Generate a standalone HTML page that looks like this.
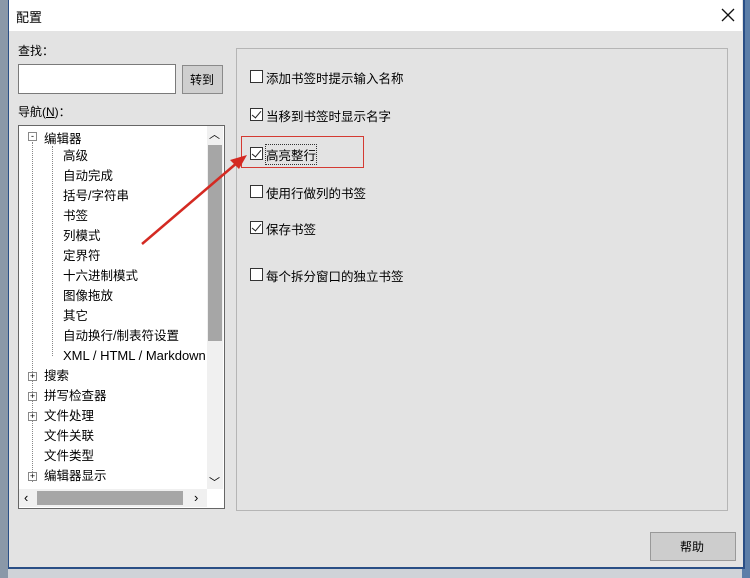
<!DOCTYPE html><html><head><meta charset="utf-8"><style>
body{margin:0;width:750px;height:578px;background:#cfd3d8;position:relative;overflow:hidden;font-family:"Liberation Sans","Noto Sans CJK SC",sans-serif;font-size:12px;color:#000}
.a{position:absolute}
.win{left:8px;top:0;width:734px;height:567px;background:#e3e3e3;border-left:1px solid #2a4f86;border-right:2px solid #2a4f86;border-bottom:2px solid #2a4f86}
.t{white-space:nowrap}
.cb{width:11px;height:11px;border:1px solid #333;background:#fff}
.ck::after{content:"";position:absolute;left:3px;top:0px;width:4px;height:8px;border-right:1.6px solid #222;border-bottom:1.6px solid #222;transform:rotate(40deg)}
.tr{font-size:12.5px}
</style></head><body>
<div class="a" style="left:0;top:0;width:8px;height:578px;background:#8a98a8"></div>
<div class="a" style="left:742px;top:0;width:8px;height:578px;background:#5c7ea8"></div>
<div class="a win"></div>
<div class="a" style="left:9px;top:0;width:733px;height:31px;background:#fff"></div>
<div class="a t" style="left:16px;top:7px;font-size:13px">配置</div>
<svg class="a" style="left:721px;top:8px" width="14" height="14"><path d="M1 1L13 13M13 1L1 13" stroke="#111" stroke-width="1.3"/></svg>
<div class="a t" style="left:18px;top:42px">查找：</div>
<div class="a" style="left:18px;top:64px;width:156px;height:28px;background:#fff;border:1px solid #7a7a7a"></div>
<div class="a" style="left:182px;top:65px;width:39px;height:27px;background:#cfcfcf;border:1px solid #8a8a8a"></div>
<div class="a t" style="left:190px;top:71px">转到</div>
<div class="a t" style="left:18px;top:103px">导航(<u>N</u>)：</div>
<div class="a" style="left:18px;top:125px;width:205px;height:382px;background:#fff;border:1px solid #666"></div>
<div class="a" style="left:207px;top:126px;width:16px;height:363px;background:#f0f0f0"></div>
<div class="a" style="left:208px;top:145px;width:14px;height:196px;background:#a6a6a6"></div>
<div class="a t" style="left:209px;top:126px;font-size:11px">︿</div>
<div class="a t" style="left:209px;top:474px;font-size:11px">﹀</div>
<div class="a" style="left:19px;top:489px;width:188px;height:18px;background:#f0f0f0"></div>
<div class="a" style="left:37px;top:491px;width:146px;height:14px;background:#a6a6a6"></div>
<div class="a t" style="left:24px;top:490px;font-size:13px">‹</div>
<div class="a t" style="left:194px;top:490px;font-size:13px">›</div>
<div class="a" style="left:32px;top:142px;height:340px;border-left:1px dotted #888"></div>
<div class="a" style="left:52px;top:146px;height:210px;border-left:1px dotted #888"></div>
<div class="a" style="left:28px;top:132px;width:7px;height:7px;border:1px solid #888;background:#fff;font-size:9px;line-height:7px;text-align:center">-</div>
<div class="a t tr" style="left:44px;top:128px">编辑器</div>
<div class="a tr" style="left:19px;top:146px;line-height:20px">
<div style="padding-left:44px">高级</div><div style="padding-left:44px">自动完成</div><div style="padding-left:44px">括号/字符串</div><div style="padding-left:44px">书签</div><div style="padding-left:44px">列模式</div><div style="padding-left:44px">定界符</div><div style="padding-left:44px">十六进制模式</div><div style="padding-left:44px">图像拖放</div><div style="padding-left:44px">其它</div><div style="padding-left:44px">自动换行/制表符设置</div><div style="padding-left:44px;font-size:13px;width:143px;overflow:hidden;white-space:nowrap">XML / HTML / Markdown</div>
<div style="padding-left:25px">搜索</div><div style="padding-left:25px">拼写检查器</div><div style="padding-left:25px">文件处理</div><div style="padding-left:25px">文件关联</div><div style="padding-left:25px">文件类型</div><div style="padding-left:25px">编辑器显示</div></div>
<div class="a" style="left:28px;top:372px;width:7px;height:7px;border:1px solid #888;background:#fff;font-size:9px;line-height:7px;text-align:center">+</div>
<div class="a" style="left:28px;top:392px;width:7px;height:7px;border:1px solid #888;background:#fff;font-size:9px;line-height:7px;text-align:center">+</div>
<div class="a" style="left:28px;top:412px;width:7px;height:7px;border:1px solid #888;background:#fff;font-size:9px;line-height:7px;text-align:center">+</div>
<div class="a" style="left:28px;top:472px;width:7px;height:7px;border:1px solid #888;background:#fff;font-size:9px;line-height:7px;text-align:center">+</div>
<div class="a" style="left:236px;top:48px;width:490px;height:461px;border:1px solid #b5b5b5;background:#e3e3e3"></div>
<div class="a cb" style="left:250px;top:70px"></div><div class="a t tr" style="left:266px;top:68px">添加书签时提示输入名称</div>
<div class="a cb ck" style="left:250px;top:108px"></div><div class="a t tr" style="left:266px;top:106px">当移到书签时显示名字</div>
<div class="a cb ck" style="left:250px;top:147px"></div><div class="a t tr" style="left:266px;top:145px;outline:1px dotted #333">高亮整行</div>
<div class="a cb" style="left:250px;top:185px"></div><div class="a t tr" style="left:266px;top:183px">使用行做列的书签</div>
<div class="a cb ck" style="left:250px;top:221px"></div><div class="a t tr" style="left:266px;top:219px">保存书签</div>
<div class="a cb" style="left:250px;top:268px"></div><div class="a t tr" style="left:266px;top:266px">每个拆分窗口的独立书签</div>
<div class="a" style="left:241px;top:136px;width:121px;height:30px;border:1.5px solid #d43a32"></div>
<svg class="a" style="left:0;top:0" width="750" height="578"><line x1="142" y1="244" x2="238" y2="162" stroke="#d42a22" stroke-width="2.5"/><polygon points="247,155 230,160 239,169" fill="#d42a22"/></svg>
<div class="a" style="left:650px;top:532px;width:84px;height:27px;background:#cdcdcd;border:1px solid #999"></div>
<div class="a t" style="left:680px;top:538px">帮助</div>
</body></html>
